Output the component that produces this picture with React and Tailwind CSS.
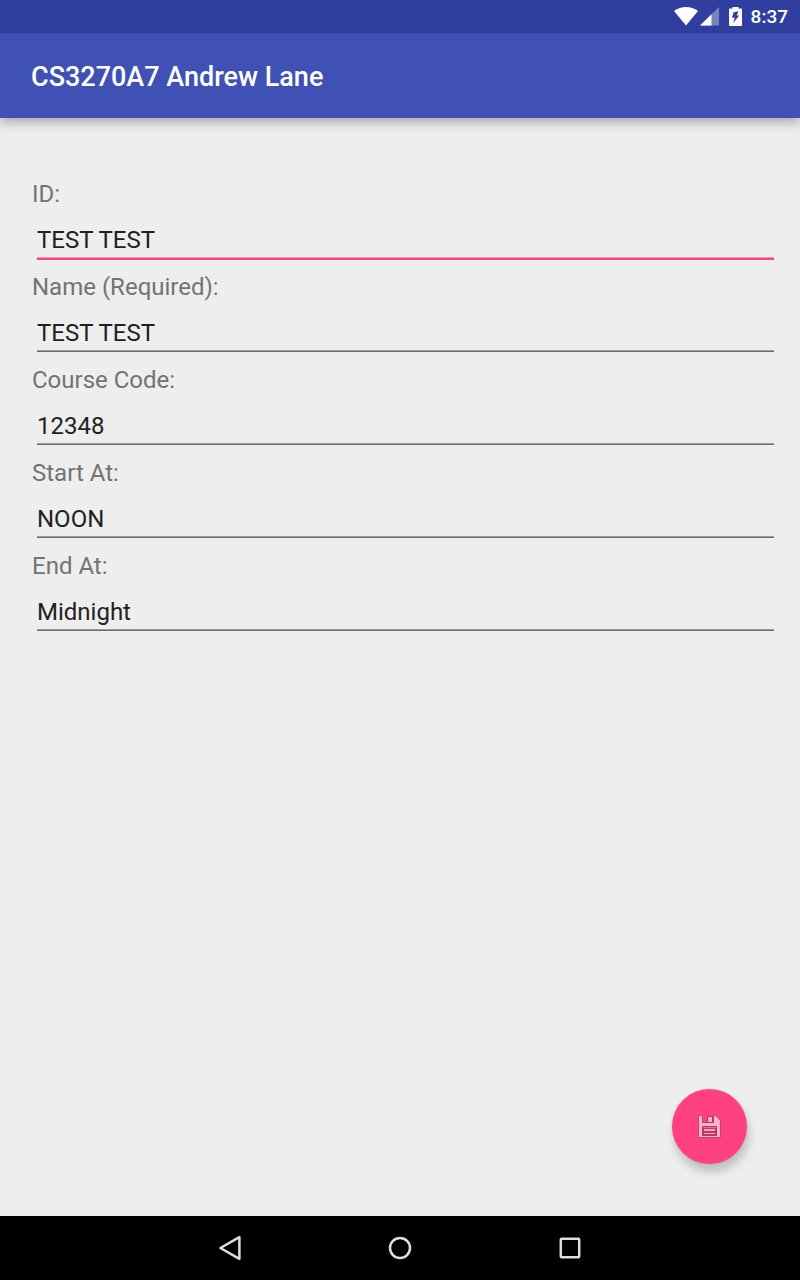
const fields = [
  { id: 'course-id', label: 'ID:', value: 'TEST TEST', active: true },
  { id: 'name', label: 'Name (Required):', value: 'TEST TEST' },
  { id: 'code', label: 'Course Code:', value: '12348' },
  { id: 'start', label: 'Start At:', value: 'NOON' },
  { id: 'end', label: 'End At:', value: 'Midnight' },
];

function StatusBar() {
  return (
    <div className="flex h-[33px] items-center justify-end bg-[#303f9f] pr-3 text-white">
      <svg className="mr-0.5 h-[19px] w-6" viewBox="0 0 24 19" aria-hidden="true">
        <path d="M0 4C7 -1.2 17 -1.2 24 4L12 18.5Z" fill="#fff" />
      </svg>
      <svg className="mr-[10px] h-[19px] w-[19px]" viewBox="0 0 19 19" aria-hidden="true">
        <path d="M19 0V18.5H0Z" fill="#fff" fillOpacity="0.35" />
        <path d="M11.5 7.3V18.5H0Z" fill="#fff" />
      </svg>
      <svg className="mr-[9px] h-[19px] w-[13px]" viewBox="0 0 13 19" aria-hidden="true">
        <path
          fill="#fff"
          fillRule="evenodd"
          d="M3.5 0H9.5V1.5H12Q13 1.5 13 2.5V18Q13 19 12 19H1Q0 19 0 18V2.5Q0 1.5 1 1.5H3.5ZM9.6 4.2L4.6 5.2L3 10.8H5.8L4 16.2L10.2 8.6H7.6Z"
        />
      </svg>
      <span className="text-[19px] leading-[33px] font-medium">8:37</span>
    </div>
  );
}

function Field({ id, label, value, active }) {
  return (
    <div className="flex h-[93px] flex-col">
      <label htmlFor={id} className="pl-[7px] text-2xl leading-8 text-[#737373]">
        {label}
      </label>
      <div className="mt-[14px] pl-3">
        <input
          id={id}
          type="text"
          defaultValue={value}
          className={
            'block w-full rounded-none bg-transparent text-2xl leading-8 text-[#212121] outline-none ' +
            (active
              ? 'h-9 border-b-2 border-[#ff4081] pb-0.5 shadow-[inset_0_-1px_0_#e29bb5]'
              : 'h-[35px] border-b border-[#6e6e6e] pb-0.5 shadow-[inset_0_-1px_0_#9c9c9c]')
          }
        />
      </div>
    </div>
  );
}

function SaveIcon() {
  return (
    <svg className="h-[25px] w-[25px]" viewBox="0 0 25 25" aria-hidden="true">
      <path
        d="M1.5 1.5H5.5V8.5H16.5V1.5H18.5L23.5 6.5V23.5H1.5Z"
        fill="#ffb3cd"
        stroke="#c8406f"
        strokeWidth="1"
        strokeLinejoin="round"
      />
      <path d="M6 1H16V8H6Z" fill="#ff4081" />
      <path d="M5.5 1.5V8.5H16.5V1.5" fill="none" stroke="#c8406f" strokeWidth="1" />
      <path d="M10.5 2.5H15.5V8.5H10.5Z" fill="#ffb3cd" stroke="#b9305f" strokeWidth="1" />
      <path d="M5 12H20V22H5Z" fill="#b93a67" />
      <path d="M6 13H19V14H6Z" fill="#e56a94" />
      <path d="M7 15H18V17H7ZM7 19H18V20H7Z" fill="#ffa6c4" />
    </svg>
  );
}

function NavBar() {
  const button = 'flex h-16 w-[170px] items-center justify-center';
  return (
    <nav className="flex h-16 justify-center bg-black">
      <button type="button" aria-label="Back" className={button}>
        <svg className="h-7 w-7" viewBox="0 0 28 28" aria-hidden="true">
          <path d="M23.4 3.2V24.8L4.4 14Z" fill="none" stroke="#dedede" strokeWidth="2.5" strokeLinejoin="round" />
        </svg>
      </button>
      <button type="button" aria-label="Home" className={button}>
        <svg className="h-7 w-7" viewBox="0 0 28 28" aria-hidden="true">
          <circle cx="14" cy="14" r="10" fill="none" stroke="#dedede" strokeWidth="2.5" />
        </svg>
      </button>
      <button type="button" aria-label="Recent apps" className={button}>
        <svg className="h-7 w-7" viewBox="0 0 28 28" aria-hidden="true">
          <rect x="4.8" y="4.8" width="18.4" height="18.4" rx="0.8" fill="none" stroke="#dedede" strokeWidth="2.5" />
        </svg>
      </button>
    </nav>
  );
}

export default function App() {
  return (
    <div className="flex min-h-screen flex-col bg-[#eeeeee] font-[Roboto,sans-serif]">
      <StatusBar />
      <header className="z-10 flex h-[85px] items-center bg-[#3f51b5] px-[31px] pt-0.5 shadow-[0_5px_10px_rgba(0,0,0,0.27)]">
        <h1 className="text-[27px] leading-8 font-medium text-white">CS3270A7 Andrew Lane</h1>
      </header>
      <main className="flex flex-1 flex-col">
        <form className="flex flex-1 flex-col pt-[60px] pr-[26px] pl-[25px]">
          {fields.map((field) => (
            <Field key={field.id} {...field} />
          ))}
          <button
            type="button"
            aria-label="Save"
            className="mt-auto mr-[27px] mb-[52px] flex h-[75px] w-[75px] items-center justify-center self-end rounded-full bg-[#ff4081] shadow-[2px_8px_10px_rgba(0,0,0,0.2),0_0_2px_rgba(0,0,0,0.15)]"
          >
            <SaveIcon />
          </button>
        </form>
      </main>
      <NavBar />
    </div>
  );
}
